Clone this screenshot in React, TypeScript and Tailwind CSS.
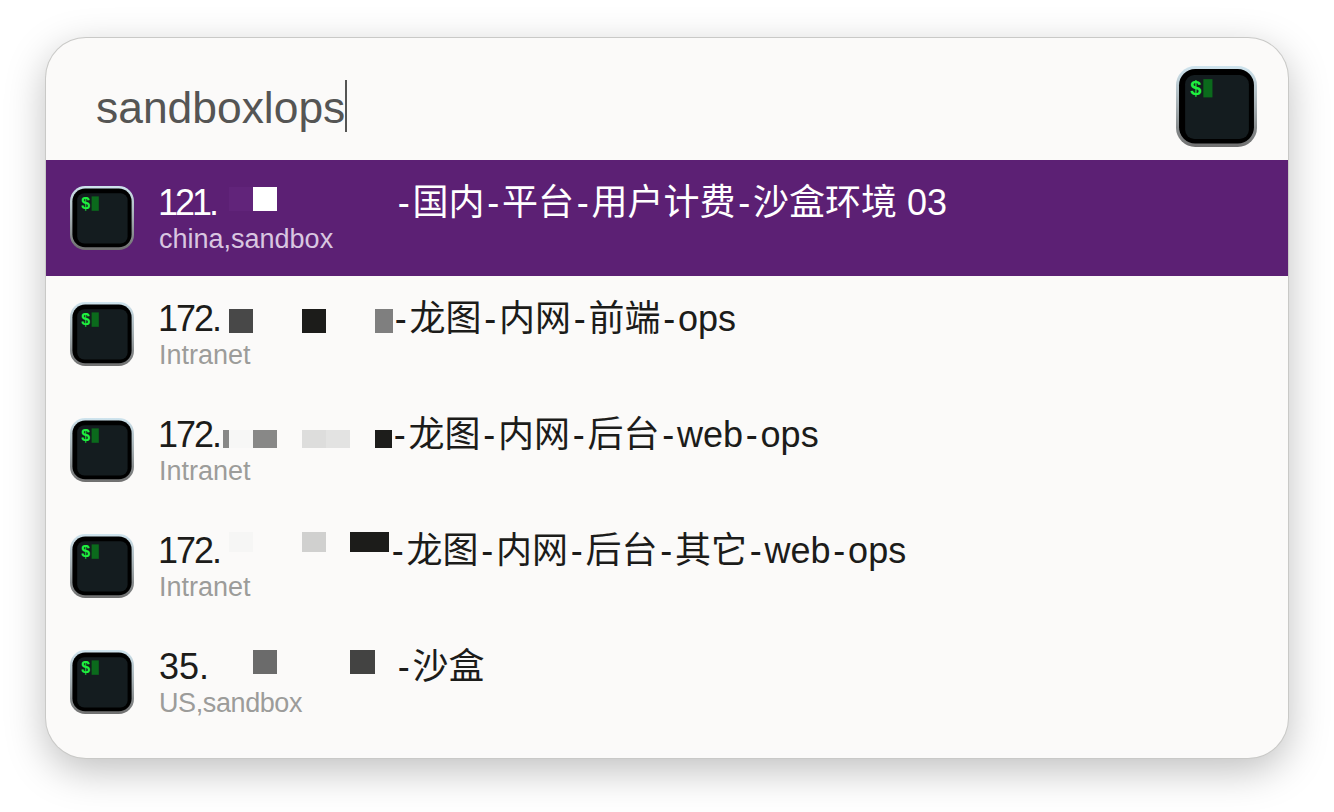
const FONT = "font-['Liberation_Sans','Noto_Sans_CJK_SC',sans-serif]";

function TerminalIcon({ className }: { className: string }) {
  return (
    <svg viewBox="0 0 80 80" className={className}>
      <defs>
        <linearGradient id="termEdge" x1="0" y1="0" x2="0" y2="1">
          <stop offset="0" stopColor="#cfe4ee" />
          <stop offset="0.5" stopColor="#a4aeb2" />
          <stop offset="1" stopColor="#6f6f6f" />
        </linearGradient>
      </defs>
      <rect x="0" y="0" width="80" height="80" rx="19" fill="url(#termEdge)" />
      <rect x="3" y="3" width="74" height="73.5" rx="16" fill="#000" />
      <rect x="9" y="9" width="63" height="63" rx="9" fill="#141c1f" />
      <text x="14" y="28.5" fontFamily="Liberation Sans, sans-serif" fontSize="20" fontWeight="700" fill="#1ff03f">$</text>
      <rect x="27" y="13" width="9" height="18" fill="#0b6a1c" />
    </svg>
  );
}

interface Row {
  prefix: string;
  prefixClass: string;
  masks: string[];
  text: string;
  textClass: string;
  tags: string;
  tagsClass?: string;
  active?: boolean;
}

const rows: Row[] = [
  {
    prefix: '121.',
    prefixClass: 'w-[65px] ml-[-1px] tracking-[-3px]',
    masks: ['w-[24px] h-[24px] ml-[6px] mt-[5px] bg-[#61247a]', 'w-[24px] h-[24px] mt-[5px] bg-white'],
    text: '-国内-平台-用户计费-沙盒环境 03',
    textClass: 'ml-[118px]',
    tags: 'china,sandbox',
    active: true,
  },
  {
    prefix: '172.',
    prefixClass: 'w-[65px] ml-[-1px] tracking-[-2px]',
    masks: [
      'w-[24px] h-[24px] ml-[6px] mt-[11px] bg-[#484848]',
      'w-[24px] h-[24px] ml-[49px] mt-[11px] bg-[#1c1c1a]',
      'w-[18px] h-[24px] ml-[49px] mt-[11px] bg-[#7f7f7f]',
    ],
    text: '-龙图-内网-前端-ops',
    textClass: 'ml-[-1px]',
    tags: 'Intranet',
  },
  {
    prefix: '172.',
    prefixClass: 'w-[65px] ml-[-1px] tracking-[-2px]',
    masks: [
      'w-[6px] h-[18px] mt-[16px] bg-[#888887]',
      'w-[24px] h-[18px] mt-[16px] bg-[#f7f7f6]',
      'w-[24px] h-[18px] mt-[16px] bg-[#888887]',
      'w-[24px] h-[18px] ml-[25px] mt-[16px] bg-[#dddddc]',
      'w-[24px] h-[18px] mt-[16px] bg-[#e3e3e2]',
      'w-[17px] h-[18px] ml-[25px] mt-[16px] bg-[#1d1d1b]',
    ],
    text: '-龙图-内网-后台-web-ops',
    textClass: 'ml-[-1px]',
    tags: 'Intranet',
  },
  {
    prefix: '172.',
    prefixClass: 'w-[65px] ml-[-1px] tracking-[-2px]',
    masks: [
      'w-[24px] h-[20px] ml-[6px] mt-[2px] bg-[#f6f6f5]',
      'w-[24px] h-[20px] ml-[49px] mt-[2px] bg-[#d0d0cf]',
      'w-[39px] h-[20px] ml-[24px] mt-[2px] bg-[#1c1c1a]',
    ],
    text: '-龙图-内网-后台-其它-web-ops',
    textClass: 'ml-0',
    tags: 'Intranet',
  },
  {
    prefix: '35.',
    prefixClass: 'w-[64px]',
    masks: [
      'w-[24px] h-[24px] ml-[30px] mt-[4px] bg-[#6b6b6b]',
      'w-[25px] h-[24px] ml-[73px] mt-[4px] bg-[#434342]',
    ],
    text: '-沙盒',
    textClass: 'ml-[20px]',
    tags: 'US,sandbox',
    tagsClass: 'tracking-[-0.4px]',
  },
];

// the CJK font's hyphen is wider than Liberation's, so pad it out
function Title({ text }: { text: string }) {
  const parts = text.split('-');
  return (
    <>
      {parts.map((p, i) => (
        <span key={i}>
          {i > 0 && <span className="inline-block w-[17.5px] text-center">-</span>}
          {p}
        </span>
      ))}
    </>
  );
}

export default function App() {
  return (
    <div className={`min-h-[812px] bg-white pl-[46px] pt-[38px] ${FONT}`}>
      <div className="w-[1242px] h-[720px] rounded-[40px] overflow-hidden bg-[#fbfaf9] shadow-[0_0_0_1px_#c9c9c7,0_12px_40px_rgba(0,0,0,0.26)] flex flex-col">
        <div className="h-[122px] shrink-0 flex items-start pl-[50px] pr-[31px]">
          <div className="flex-1 flex items-center h-[52px] mt-[42px]">
            <span className="text-[44.4px] leading-[52px] mt-[4px] text-[#555554]">sandboxlops</span>
            <span className="w-[2px] h-[52px] bg-[#555554]" />
          </div>
          <TerminalIcon className="w-[81px] h-[81px] mt-[28px]" />
        </div>
        {rows.map((row, i) => (
          <div
            key={i}
            className={`h-[116px] shrink-0 flex items-start pl-[24px] pt-[26px] ${row.active ? 'bg-[#5c2074]' : ''}`}
          >
            <TerminalIcon className="w-[64px] h-[64px] shrink-0" />
            <div className="ml-[25px] flex flex-col mt-[-4px]">
              <div className={`flex items-start h-[40px] text-[36px] leading-[40px] ${row.active ? 'text-white' : 'text-[#1c1c1a]'}`}>
                <span className={`shrink-0 mt-px ${row.prefixClass}`}>{row.prefix}</span>
                {row.masks.map((m, j) => (
                  <span key={j} className={`shrink-0 ${m}`} />
                ))}
                <span className={`whitespace-nowrap mt-px ${row.textClass}`}>
                  <Title text={row.text} />
                </span>
              </div>
              <div className={`text-[27px] leading-[32px] mt-[1px] ${row.tagsClass ?? ''} ${row.active ? 'text-[#d9c6e0]' : 'text-[#9c9c9a]'}`}>{row.tags}</div>
            </div>
          </div>
        ))}
      </div>
    </div>
  );
}
